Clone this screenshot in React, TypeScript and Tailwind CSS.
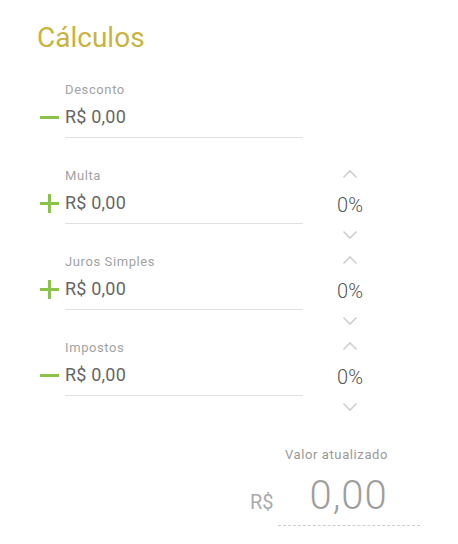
import React from 'react';

type Row = { label: string; sign: 'plus' | 'minus'; percent: boolean };

const rows: Row[] = [
  { label: 'Desconto', sign: 'minus', percent: false },
  { label: 'Multa', sign: 'plus', percent: true },
  { label: 'Juros Simples', sign: 'plus', percent: true },
  { label: 'Impostos', sign: 'minus', percent: true },
];

const SignIcon: React.FC<{ sign: 'plus' | 'minus' }> = ({ sign }) => (
  <svg width="19" height="19" viewBox="0 0 19 19" className="shrink-0">
    <rect x="0" y="8" width="19" height="3" fill="#8bc34a" />
    {sign === 'plus' && <rect x="8" y="0" width="3" height="19" fill="#8bc34a" />}
  </svg>
);

const Chevron: React.FC<{ dir: 'up' | 'down' }> = ({ dir }) => (
  <svg width="16" height="10" viewBox="0 0 16 10" className="block">
    <path
      d={dir === 'up' ? 'M1.5 8.5 L8 2 L14.5 8.5' : 'M1.5 1.5 L8 8 L14.5 1.5'}
      fill="none"
      stroke="#cfcfcf"
      strokeWidth="1.6"
    />
  </svg>
);

export default function App() {
  return (
    <div className="w-[458px] h-[544px] bg-white font-['Roboto',sans-serif] overflow-hidden">
      {/* Título */}
      <h1 className="pl-[37px] pt-[24px] text-[28px] leading-none text-[#c8b43e] font-normal">Cálculos</h1>

      <div className="mt-[30px]">
        {rows.map((r) => (
          <div key={r.label} className="flex h-[86px] items-start">
            <div className="ml-[40px] w-[25px] h-[78px] flex items-start pt-[26px]">
              <SignIcon sign={r.sign} />
            </div>
            <div className="w-[238px] pb-2 border-b border-[#e0e0e0]">
              <div className="text-[13px] leading-4 tracking-[0.6px] text-[#a3a3a3]">{r.label}</div>
              <div className="mt-[7px] text-[18px] leading-6 tracking-[0.2px] text-[#666666]">R$ 0,00</div>
            </div>
            {r.percent && (
              <div className="ml-[27px] w-[40px] flex flex-col items-center pt-px">
                <Chevron dir="up" />
                <div className="mt-[14px] text-[20px] leading-6 font-light text-[#555555]">0%</div>
                <div className="mt-[13px]">
                  <Chevron dir="down" />
                </div>
              </div>
            )}
          </div>
        ))}
      </div>

      {/* Valor atualizado */}
      <div className="mt-[21px] flex justify-end pr-[70px]">
        <span className="text-[13px] leading-4 tracking-[0.6px] text-[#9a9a9a]">Valor atualizado</span>
      </div>
      <div className="mt-[9px] flex items-baseline pl-[250px]">
        <span className="text-[20px] leading-6 text-[#ababab]">R$</span>
        <div className="ml-[4px] w-[142px] pb-[5px] border-b border-dashed border-[#cccccc] text-center">
          <span className="text-[40px] leading-[48px] font-light tracking-[1px] text-[#9e9e9e]">0,00</span>
        </div>
      </div>
    </div>
  );
}
